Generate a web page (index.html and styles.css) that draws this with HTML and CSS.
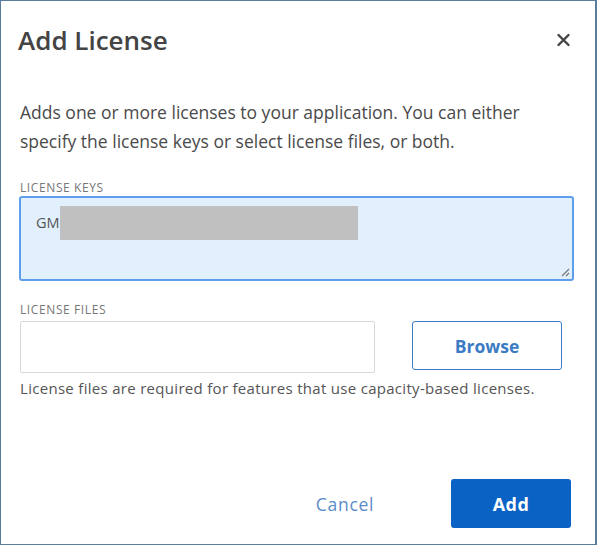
FILE: index.html
```html
<!DOCTYPE html>
<html>
<head>
<meta charset="utf-8">
<link rel="stylesheet" href="styles.css">
</head>
<body>
<div class="dialog">
  <div class="header">
    <h1 class="title">Add License</h1>
    <span class="close">
      <svg width="15" height="14" viewBox="0 0 15 14"><path d="M2.5 2L12.5 12M12.5 2L2.5 12" stroke="#444" stroke-width="2.4" stroke-linecap="round"/></svg>
    </span>
  </div>
  <p class="desc">Adds one or more licenses to your application. You can either specify the license keys or select license files, or both.</p>
  <div class="field">
    <div class="label">LICENSE KEYS</div>
    <div class="keys">
      <span class="keytext">GM</span><span class="redact"></span>
      <svg class="grip" width="10" height="10" viewBox="0 0 10 10"><path d="M9 2L2 9M9 6L6 9" stroke="#777" stroke-width="1.2"/></svg>
    </div>
  </div>
  <div class="field files">
    <div class="label">LICENSE FILES</div>
    <div class="filerow">
      <div class="fileinput"></div>
      <button class="browse">Browse</button>
    </div>
    <div class="help">License files are required for features that use capacity-based licenses.</div>
  </div>
  <div class="footer">
    <button class="cancel">Cancel</button>
    <button class="add">Add</button>
  </div>
</div>
</body>
</html>
```
FILE: styles.css
```css
html, body {
  margin: 0;
  padding: 0;
  background: #fff;
}
body {
  font-family: "Open Sans", "Noto Sans", sans-serif;
  color: #444;
}
.dialog {
  box-sizing: border-box;
  width: 597px;
  height: 545px;
  border: 1px solid #5b7d9c;
  border-right-width: 2px;
  padding: 0 24px 0 17px;
  display: flex;
  flex-direction: column;
}
.header {
  display: flex;
  justify-content: space-between;
  align-items: center;
  height: 77px;
}
.title {
  margin: 0;
  font-size: 26px;
  font-weight: 600;
  color: #444;
}
.close {
  display: flex;
  margin-top: 1px;
}
.desc {
  margin: 20px 0 0 2px;
  font-size: 17.5px;
  letter-spacing: 0;
  line-height: 29px;
  color: #4a4a4a;
  width: 540px;
}
.field {
  margin-top: 26px;
}
.label {
  font-size: 12px;
  letter-spacing: 0.6px;
  color: #777;
  line-height: 12px;
  padding-left: 2px;
}
.keys {
  position: relative;
  box-sizing: border-box;
  margin-top: 2px;
  margin-left: 1px;
  width: 555px;
  height: 85px;
  border: 2px solid #5e9fec;
  border-radius: 3px;
  background: #e2effd;
  padding: 8px 0 0 15px;
  display: flex;
  align-items: flex-start;
}
.keytext {
  font-size: 14.5px;
  color: #555;
  line-height: 33px;
}
.redact {
  width: 298px;
  height: 34px;
  background: #c0c0c0;
}
.grip {
  position: absolute;
  right: 2px;
  bottom: 2px;
}
.files {
  margin-top: 23px;
}
.filerow {
  display: flex;
  align-items: flex-start;
  margin-top: 5px;
}
.fileinput {
  box-sizing: border-box;
  margin-left: 2px;
  width: 355px;
  height: 52px;
  border: 1px solid #d8d8d8;
  border-radius: 2px;
}
.browse {
  box-sizing: border-box;
  margin-left: 37px;
  width: 150px;
  height: 49px;
  border: 1px solid #3d7dc8;
  border-radius: 3px;
  background: #fff;
  color: #3b7bc4;
  font-family: "Open Sans", "Noto Sans", sans-serif;
  font-size: 17.5px;
  font-weight: 700;
}
.help {
  margin-top: 5px;
  margin-left: 2px;
  font-size: 15px;
  letter-spacing: 0.3px;
  color: #555;
  line-height: 20px;
}
.footer {
  margin-top: auto;
  margin-bottom: 16px;
  display: flex;
  justify-content: flex-end;
  align-items: center;
}
.cancel {
  border: 0;
  background: none;
  color: #5b8cc9;
  font-family: "Open Sans", "Noto Sans", sans-serif;
  font-size: 17.5px;
  letter-spacing: 0.7px;
  width: 120px;
  height: 49px;
  margin-right: 46px;
}
.add {
  border: 0;
  width: 120px;
  height: 49px;
  border-radius: 3px;
  background: #0a62c5;
  color: #fff;
  font-family: "Open Sans", "Noto Sans", sans-serif;
  font-size: 18px;
  letter-spacing: 0.4px;
  font-weight: 700;
}
```
